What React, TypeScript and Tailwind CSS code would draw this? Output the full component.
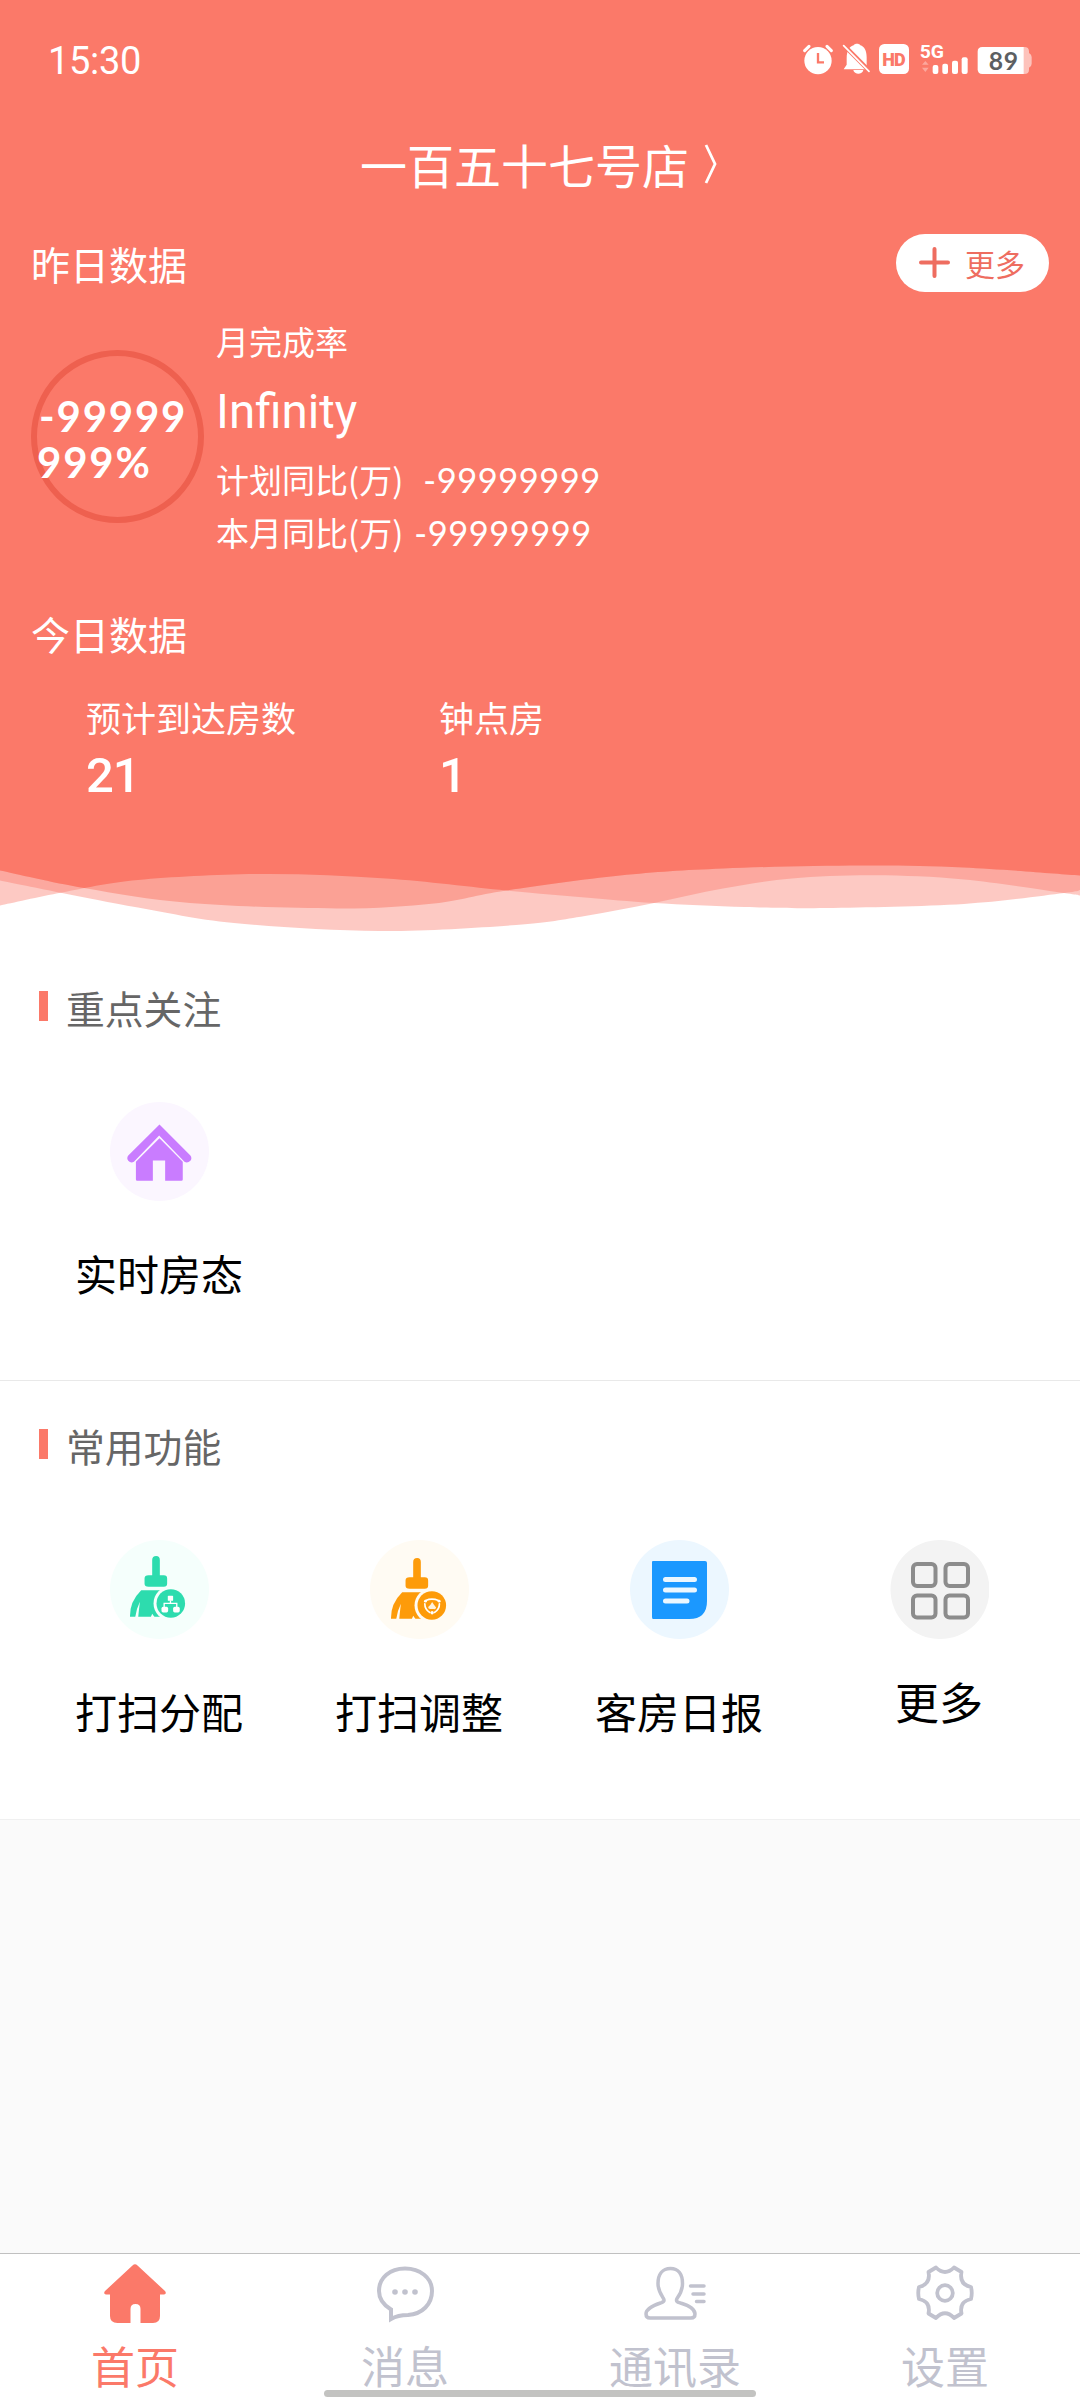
import React from "react";

type Point = [number, number];

// Catmull-Rom spline through the points, as cubic segments
const spline = (pts: Point[]) => {
  let d = `M${pts[0][0]} ${pts[0][1]}`;
  for (let i = 0; i < pts.length - 1; i++) {
    const p0 = pts[i - 1] || pts[i];
    const p1 = pts[i];
    const p2 = pts[i + 1];
    const p3 = pts[i + 2] || p2;
    d += `C${p1[0] + (p2[0] - p0[0]) / 6} ${p1[1] + (p2[1] - p0[1]) / 6} ${
      p2[0] - (p3[0] - p1[0]) / 6
    } ${p2[1] - (p3[1] - p1[1]) / 6} ${p2[0]} ${p2[1]}`;
  }
  return d;
};

const fillAbove = (pts: Point[]) => `${spline(pts)}V0H0Z`;

const FRONT_WAVE = fillAbove([
  [0, 10.5],
  [84, 28],
  [190, 43],
  [337, 48.5],
  [434, 43.5],
  [506, 30.5],
  [620, 15.5],
  [723, 8.5],
  [861, 5.5],
  [964, 7.5],
  [1080, 15.5],
]);

const MIDDLE_WAVE = fillAbove([
  [0, 45.5],
  [62, 32.5],
  [138, 20],
  [262, 14],
  [386, 18.5],
  [506, 30.5],
  [585, 37.5],
  [654, 43],
  [745, 47],
  [826, 48],
  [964, 44],
  [1064, 33],
  [1080, 30],
]);

const BACK_WAVE = fillAbove([
  [0, 20.5],
  [62, 33],
  [138, 47.5],
  [234, 63],
  [379, 71],
  [516, 65],
  [585, 56],
  [654, 43],
  [723, 28.5],
  [792, 18.5],
  [875, 15.3],
  [964, 19.5],
  [1064, 33],
  [1080, 35.5],
]);

const Waves: React.FC = () => (
  <svg className="block h-[80px] w-full" viewBox="0 0 1080 80">
    <clipPath id="middle-wave">
      <path d={MIDDLE_WAVE} />
    </clipPath>
    <path d={BACK_WAVE} fill="#fb7969" fillOpacity="0.4" />
    <path d={MIDDLE_WAVE} fill="#fb7969" fillOpacity="0.4" />
    <path d={FRONT_WAVE} fill="#fba195" />
    <path d={FRONT_WAVE} fill="#fb7969" clipPath="url(#middle-wave)" />
  </svg>
);

const StatusBar: React.FC = () => (
  <div className="flex h-[120px] items-center justify-between pr-[48px] pl-[48px] text-white">
    <span className="pt-[2px] font-[Roboto] text-[38px] leading-none tracking-[-0.3px]">15:30</span>
    <div className="mb-[2px] flex h-[32px] items-center">
      <svg className="h-[32px] w-[30px]" viewBox="72 66 90 96" fill="#fff">
        <circle cx="117" cy="119" r="41" />
        <path d="M77 89l13-13M157 89l-13-13" stroke="#fff" strokeWidth="9" strokeLinecap="round" />
        <path d="M117 96v28h18" fill="none" stroke="#fb7969" strokeWidth="7" />
      </svg>
      <svg className="ml-[9px] h-[32px] w-[28px]" viewBox="188 66 84 96" fill="#fff">
        <path d="M202 112c0-24 10-37 21-39c3-6 17-6 20 0c12 4 19 16 19 36v25l7 11h-76l9-14z" />
        <path d="M222 147h30c-3 15-27 15-30 0z" />
        <path d="M190 69l78 79" stroke="#fb7969" strokeWidth="13" />
        <path d="M193 74l76 77" stroke="#fff" strokeWidth="5" strokeLinecap="round" />
      </svg>
      <svg className="ml-[8px] h-[32px] w-[32px]" viewBox="294 66 96 96">
        <rect x="297" y="69" width="90" height="90" rx="16" fill="#fff" />
        <text
          x="342"
          y="134"
          textAnchor="middle"
          textLength="70"
          fontFamily="Roboto"
          fontWeight="900"
          fontSize="54"
          fill="#fb7969"
        >
          HD
        </text>
      </svg>
      <svg className="ml-[9px] h-[32px] w-[50px] overflow-visible" viewBox="418 66 150 96" fill="#fff">
        <text
          x="420"
          y="110"
          textLength="73"
          lengthAdjust="spacingAndGlyphs"
          fontFamily="Roboto"
          fontWeight="700"
          fontSize="57"
        >
          5G
        </text>
        <path d="M427 131l10-11l10 11zM427 140h20l-10 13z" opacity="0.35" />
        <rect x="459" y="132" width="17" height="27" rx="6" />
        <rect x="488" y="128" width="17" height="31" rx="6" />
        <rect x="517" y="119" width="18" height="40" rx="6" />
        <rect x="546" y="109" width="18" height="50" rx="6" />
      </svg>
      <svg className="ml-[8px] h-[32px] w-[55px]" viewBox="592 66 165 96">
        <path
          d="M730 78h4q14 0 14 13v5q8 4 8 12v20q0 8-8 12v6q0 13-14 13h-4z"
          fill="#fff"
          opacity="0.55"
        />
        <path d="M608 78h124v81h-124q-14 0-14-14v-53q0-14 14-14z" fill="#fff" />
        <text
          x="671"
          y="146"
          textAnchor="middle"
          textLength="88"
          fontFamily="Lato"
          fontWeight="700"
          fontSize="74"
          fill="#5c5f62"
        >
          89
        </text>
      </svg>
    </div>
  </div>
);

const PurpleHouseIcon: React.FC = () => (
  <svg className="size-[99px]" viewBox="329 426 298 298">
    <circle cx="478" cy="575" r="149" fill="#fbf6ff" />
    <path
      d="M478 494l93 93q6 8 0 16q-9 9-18 3l-76-79l-76 79q-9 6-17-3q-6-8 0-16z"
      fill="#c97cff"
    />
    <path d="M478 535l70 71v53q0 4-4 4h-49v-61h-37v61h-47q-4 0-4-4v-53z" fill="#c97cff" />
  </svg>
);

const Broom: React.FC<{ color: string; halo: string }> = ({ color, halo }) => (
  <g fill={color}>
    <path d="M156 90q0-12 12-12q11 0 11 12v46h12q10 0 10 10v16q0 9-10 9h-46q-12 0-12-9v-16q0-10 12-10h11z" />
    <path d="M123 181h72v80h-106q-1-46 34-80z" />
    <path d="M105 262q3-24 14-46q-3 24-5 46zM152 262l4-10l7 10z" fill={halo} />
    <circle cx="212" cy="221" r="52" fill={halo} />
    <circle cx="212" cy="221" r="43" />
  </g>
);

const AssignIcon: React.FC = () => (
  <svg className="size-[99px]" viewBox="29 30 298 298">
    <circle cx="178" cy="179" r="149" fill="#f5fffc" />
    <Broom color="#2ddcae" halo="#f5fffc" />
    <g fill="#fff">
      <rect x="203" y="198" width="16" height="15" rx="2" />
      <rect x="184" y="231" width="20" height="17" rx="5" />
      <rect x="219" y="231" width="20" height="17" rx="5" />
      <path d="M211 212v9M192 233v-12h38v12" fill="none" stroke="#fff" strokeWidth="4" />
    </g>
  </svg>
);

const AdjustIcon: React.FC = () => (
  <svg className="size-[99px]" viewBox="29 30 298 298">
    <circle cx="178" cy="179" r="149" fill="#fffbf3" />
    <g transform="translate(3 6)">
      <Broom color="#fd9b0a" halo="#fffbf3" />
      <path
        d="M194 206q18-8 38 0M191 216q0 18 15 26M235 216q0 18-15 26"
        fill="none"
        stroke="#fff"
        strokeWidth="5"
        strokeLinecap="round"
      />
      <circle cx="193" cy="208" r="4.500" fill="#fff" />
      <circle cx="234" cy="208" r="4.500" fill="#fff" />
      <circle cx="213" cy="243" r="5" fill="#fff" />
      <path d="M213 211l5 7l7 9q-1 6-7 5h-11q-6 0-6-6l7-7z" fill="#fff3dd" />
    </g>
  </svg>
);

const ReportIcon: React.FC = () => (
  <svg className="size-[99px]" viewBox="0 0 99 99">
    <circle cx="49.500" cy="49.500" r="49.500" fill="#ecf7ff" />
    <path d="M23 21h52q2 0 2 2v38q0 18-18 18h-36q-1 0-1-2v-55q0-1 1-1z" fill="#1b98ff" />
    <path
      d="M35.500 39.500h29M35.500 50h29M35.500 61h21.500"
      stroke="#ecf7ff"
      strokeWidth="5"
      strokeLinecap="round"
    />
  </svg>
);

const GridIcon: React.FC = () => (
  <svg className="size-[99px]" viewBox="0 0 99 99" fill="none" stroke="#8c8c8c" strokeWidth="4">
    <circle cx="50" cy="49.500" r="49.500" fill="#f3f3f3" stroke="none" />
    <rect x="23" y="24" width="22.500" height="22" rx="4" />
    <rect x="55.500" y="24" width="22.500" height="22" rx="4" />
    <rect x="23" y="55.500" width="22.500" height="22" rx="4" />
    <rect x="55.500" y="55.500" width="22.500" height="22" rx="4" />
  </svg>
);

const SectionTitle: React.FC<{ title: string }> = ({ title }) => (
  <div className="flex h-[54px] items-center pl-[39px] text-[38.800px] text-[#666]">
    <span className="mr-[18px] mb-[2px] h-[30px] w-[9px] bg-[#fb7969]" />
    {title}
  </div>
);

const Shortcut: React.FC<{ icon: React.ReactNode; label: string }> = ({ icon, label }) => (
  <div className="flex flex-col items-center">
    {icon}
    <span className="mt-[42px] h-[60px] text-[42px] leading-[60px] text-black">{label}</span>
  </div>
);

const HomeIcon: React.FC = () => (
  <svg className="size-[62px]" viewBox="0 0 62 62" fill="#fb7969">
    <path d="M28.500 4.500q2.500-2.500 5 0L61 30q2 3-1 3.500h-4v21.500q0 7-7 7h-12.500v-14q0-5-5-5t-5 5v14h-13q-7.500 0-7.500-7v-21.500h-4q-3-.5-1-3.500z" />
  </svg>
);

const MessageIcon: React.FC = () => (
  <svg className="size-[62px]" viewBox="0 0 62 62" fill="none" stroke="#c1c2ce" strokeWidth="4">
    <path d="M31 7.500c-15 0-26 9-26 22.500c0 8 4.500 14 12 18.500v9.500c6-3.500 10-4 17-4c14.500-1 24-11 24-24c0-13.500-12-22.500-27-22.500z" />
    <g fill="#c1c2ce" stroke="none">
      <circle cx="21" cy="31" r="2.800" />
      <circle cx="31" cy="31" r="2.800" />
      <circle cx="41" cy="31" r="2.800" />
    </g>
  </svg>
);

const ContactsIcon: React.FC = () => (
  <svg
    className="size-[62px]"
    viewBox="0 0 62 62"
    fill="none"
    stroke="#c1c2ce"
    strokeWidth="3.500"
    strokeLinecap="round"
    strokeLinejoin="round"
  >
    <path d="M26.500 7.500c-8 0-12.500 6-12.500 15c0 7 3 11 5.500 15c1.500 3-.5 3.500-3 4.500c-9 3-14.500 6-14.500 11c0 3 1.500 4 4 4h41c2.500 0 4-1.500 4-4c0-5-4.500-8-14.500-11c-3-1-5-1.500-3.500-4.500c3-4 5.500-8 5.500-15c0-9-4-15-12-15z" />
    <path d="M46.500 25h13.500M49 33h11M52.500 40.500h7.500" />
  </svg>
);

const SettingsIcon: React.FC = () => (
  <svg
    className="size-[62px]"
    viewBox="0 0 62 62"
    fill="none"
    stroke="#c1c2ce"
    strokeWidth="3.800"
    strokeLinejoin="round"
  >
    <path d="M22 6.500q9 9 18 0l7.500 4.500q-2.500 12.500 9.500 15q1.500 6 0 12q-12 2.500-9.500 14.500l-7.500 4.500q-9-9.500-18 0l-7.500-4.500q2.500-12-9.500-14.500q-1.500-6 0-12q12-3 9.500-15z" />
    <circle cx="31" cy="32" r="7.800" />
  </svg>
);

const TABS = [
  { label: "首页", icon: <HomeIcon />, color: "text-[#fb7969]" },
  { label: "消息", icon: <MessageIcon />, color: "text-[#c1c2ce]" },
  { label: "通讯录", icon: <ContactsIcon />, color: "text-[#c1c2ce]" },
  { label: "设置", icon: <SettingsIcon />, color: "text-[#c1c2ce]" },
];

export default function App() {
  return (
    <div className="flex h-[2400px] w-[1080px] flex-col overflow-hidden bg-white font-['Noto_Sans_CJK_SC',sans-serif]">
      <header className="h-[860px] shrink-0 bg-[#fb7969] text-white">
        <StatusBar />

        <div className="flex h-[90px] items-center justify-center pr-[2px] pb-[3px] text-[47px] leading-none">
          一百五十七号店
          <svg className="ml-[15px] h-[42px] w-[14px]" viewBox="0 0 14 42">
            <path d="M2 2l9 19l-9 19" fill="none" stroke="#fff" strokeWidth="2.800" />
          </svg>
        </div>

        <div className="mt-[24px] flex h-[58px] items-center justify-between pr-[31px] pl-[31px]">
          <h2 className="text-[39px]">昨日数据</h2>
          <button className="flex h-[58px] w-[153px] items-center rounded-full bg-white pl-[23px] text-[30px] leading-none text-[#ee6d60]">
            <svg className="mr-[15px] mb-[1px] size-[31px]" viewBox="0 0 31 31">
              <path d="M15.500 2v27M2 15.500h27" stroke="#ee6d60" strokeWidth="4" strokeLinecap="round" />
            </svg>
            更多
          </button>
        </div>

        <div className="flex">
          <div className="mt-[58px] ml-[31px] flex size-[173px] items-center rounded-full border-[6px] border-[#ee604f] pt-[4px]">
            <p className="w-[160px] font-[Lato] text-[42px] leading-[46px] font-bold tracking-[1.800px] break-all">
              <span className="ml-[2px]">-99999</span>
              <br />
              999%
            </p>
          </div>
          <div className="ml-[12px] pt-[18px] text-[33px]">
            <div className="h-[60px] pt-[1px] leading-[60px]">月完成率</div>
            <div className="h-[82px] pt-[1px] font-[Roboto] text-[47.500px] leading-[82px]">Infinity</div>
            <div className="flex h-[56px] items-center">
              计划同比(万)
              <span className="ml-[20px] font-[Lato] text-[34.500px] tracking-[0.500px]">-99999999</span>
            </div>
            <div className="flex h-[50px] items-center">
              本月同比(万)
              <span className="ml-[11px] font-[Lato] text-[34.500px] tracking-[0.500px]">-99999999</span>
            </div>
          </div>
        </div>

        <h2 className="mt-[42px] h-[66px] pl-[31px] text-[39px] leading-[66px]">今日数据</h2>
        <div className="mt-[24px] grid grid-cols-[353px_353px] pl-[86px]">
          <div>
            <div className="h-[54px] text-[35px] leading-[54px]">预计到达房数</div>
            <div className="h-[63px] font-[Roboto] text-[49px] leading-[63px] font-medium tracking-[-1px]">
              21
            </div>
          </div>
          <div>
            <div className="h-[54px] text-[35px] leading-[54px]">钟点房</div>
            <div className="h-[63px] font-[Roboto] text-[49px] leading-[63px] font-medium tracking-[-1px]">
              1
            </div>
          </div>
        </div>
      </header>
      <Waves />

      <section className="h-[440px] shrink-0 pt-[40px]">
        <SectionTitle title="重点关注" />
        <div className="mt-[68px] grid grid-cols-4 pr-[11px] pl-[29px]">
          <Shortcut icon={<PurpleHouseIcon />} label="实时房态" />
        </div>
      </section>

      <section className="h-[439px] shrink-0 border-t border-[#e9e9e9] pt-[37px]">
        <SectionTitle title="常用功能" />
        <div className="mt-[68px] grid grid-cols-4 pr-[11px] pl-[29px]">
          <Shortcut icon={<AssignIcon />} label="打扫分配" />
          <Shortcut icon={<AdjustIcon />} label="打扫调整" />
          <Shortcut icon={<ReportIcon />} label="客房日报" />
          <div className="flex flex-col items-center">
            <GridIcon />
            <span className="mt-[32px] h-[60px] text-[44px] leading-[60px] text-black">更多</span>
          </div>
        </div>
      </section>

      <main className="flex-1 border-t border-[#f0f0f0] bg-[#fafafa]" />

      <nav className="relative grid h-[147px] shrink-0 grid-cols-4 border-t border-[#c0c0c0] bg-white">
        {TABS.map((tab) => (
          <div key={tab.label} className={`flex flex-col items-center pt-[7px] ${tab.color}`}>
            {tab.icon}
            <span className="mt-[12px] h-[60px] text-[44px] leading-[60px]">{tab.label}</span>
          </div>
        ))}
        <div className="absolute bottom-[3px] left-[324px] h-[7px] w-[432px] rounded-full bg-[#c3c3c1]" />
      </nav>
    </div>
  );
}
